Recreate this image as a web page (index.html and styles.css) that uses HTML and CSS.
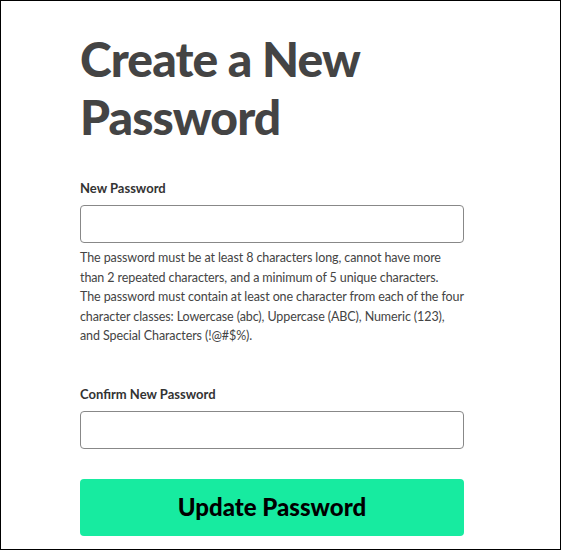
FILE: index.html
```html
<!DOCTYPE html>
<html lang="en">
<head>
<meta charset="utf-8">
<title>Create a New Password</title>
<link rel="stylesheet" href="styles.css">
</head>
<body>
<div class="frame">
  <form class="form">
    <h1 class="title">Create a New Password</h1>
    <label class="label" for="pw">New Password</label>
    <input class="input" id="pw" type="password">
    <p class="help">The password must be at least 8 characters long, cannot have more than 2 repeated characters, and a minimum of 5 unique characters.<br>The password must contain at least one character from each of the four character classes: Lowercase (abc), Uppercase (ABC), Numeric (123), and Special Characters (!@#$%).</p>
    <label class="label label-confirm" for="pw2">Confirm New Password</label>
    <input class="input" id="pw2" type="password">
    <button class="submit" type="button">Update Password</button>
  </form>
</div>
</body>
</html>
```

FILE: styles.css
```css
html, body {
  margin: 0;
  padding: 0;
  background: #fff;
}
.frame {
  box-sizing: border-box;
  width: 561px;
  height: 550px;
  border: 1px solid #000;
  padding: 29px 0 0 79px;
  overflow: hidden;
  font-family: Lato, "Liberation Sans", sans-serif;
}
.form {
  width: 384px;
  display: flex;
  flex-direction: column;
}
.title {
  margin: 0 0 33px;
  font-size: 48px;
  line-height: 58px;
  font-weight: 900;
  color: #444;
  letter-spacing: -0.9px;
}
.label {
  font-size: 13px;
  line-height: 18px;
  font-weight: 700;
  color: #333;
  margin-bottom: 8px;
}
.label-confirm {
  margin-top: 39px;
}
.input {
  box-sizing: border-box;
  height: 38px;
  width: 384px;
  margin: 0;
  border: 1px solid #888;
  border-radius: 4px;
  background: #fff;
}
.help {
  margin: 5px 0 0;
  font-size: 12.5px;
  line-height: 19.5px;
  letter-spacing: -0.1px;
  color: #444;
}
.submit {
  margin-top: 30px;
  height: 57px;
  width: 384px;
  padding: 0 0 2px;
  border: 0;
  border-radius: 4px;
  background: #17eba0;
  color: #000;
  font-family: Lato, "Liberation Sans", sans-serif;
  font-size: 24px;
  font-weight: 900;
}
```
